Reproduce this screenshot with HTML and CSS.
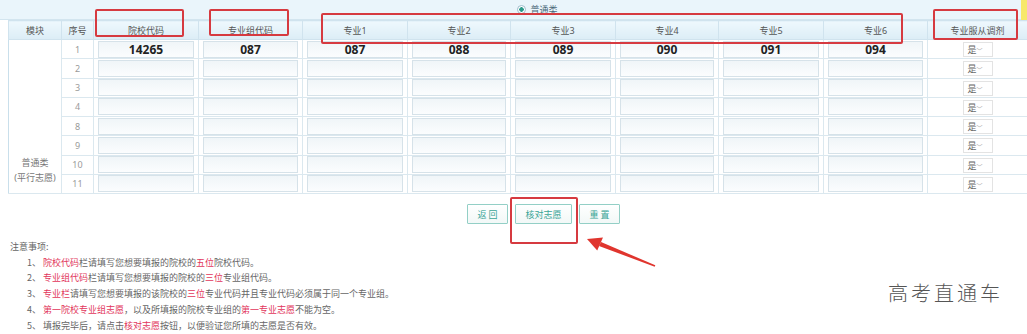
FILE: index.html
```html
<!DOCTYPE html>
<html lang="zh-CN">
<head>
  <meta charset="UTF-8">
  <title>志愿填报</title>
  <link rel="stylesheet" href="styles.css">
</head>
<body>
  <div class="page">
    <div class="wrap">
      <div class="kind-bar">
        <label class="kind"><span class="radio"></span>普通类</label>
      </div>
      <table class="grid">
        <colgroup>
          <col style="width:53px"><col style="width:32px"><col style="width:105px"><col style="width:104px">
          <col style="width:105px"><col style="width:103px"><col style="width:105px"><col style="width:103px">
          <col style="width:105px"><col style="width:104px"><col style="width:100px">
        </colgroup>
        <thead>
          <tr>
            <th>模块</th><th>序号</th><th>院校代码</th><th>专业组代码</th>
            <th>专业1</th><th>专业2</th><th>专业3</th><th>专业4</th><th>专业5</th><th>专业6</th>
            <th>专业服从调剂</th>
          </tr>
        </thead>
        <tbody>
          <tr>
            <td class="module" rowspan="8">普通类<br>(平行志愿)</td>
            <td class="no">1</td>
            <td><span class="box">14265</span></td><td><span class="box">087</span></td>
            <td><span class="box">087</span></td><td><span class="box">088</span></td><td><span class="box">089</span></td>
            <td><span class="box">090</span></td><td><span class="box">091</span></td><td><span class="box">094</span></td>
            <td class="opt"><span class="pick">是<i>﹀</i></span></td>
          </tr>
          <tr>
            <td class="no">2</td>
            <td><span class="box"></span></td><td><span class="box"></span></td><td><span class="box"></span></td><td><span class="box"></span></td>
            <td><span class="box"></span></td><td><span class="box"></span></td><td><span class="box"></span></td><td><span class="box"></span></td>
            <td class="opt"><span class="pick">是<i>﹀</i></span></td>
          </tr>
          <tr>
            <td class="no">3</td>
            <td><span class="box"></span></td><td><span class="box"></span></td><td><span class="box"></span></td><td><span class="box"></span></td>
            <td><span class="box"></span></td><td><span class="box"></span></td><td><span class="box"></span></td><td><span class="box"></span></td>
            <td class="opt"><span class="pick">是<i>﹀</i></span></td>
          </tr>
          <tr>
            <td class="no">4</td>
            <td><span class="box"></span></td><td><span class="box"></span></td><td><span class="box"></span></td><td><span class="box"></span></td>
            <td><span class="box"></span></td><td><span class="box"></span></td><td><span class="box"></span></td><td><span class="box"></span></td>
            <td class="opt"><span class="pick">是<i>﹀</i></span></td>
          </tr>
          <tr>
            <td class="no">8</td>
            <td><span class="box"></span></td><td><span class="box"></span></td><td><span class="box"></span></td><td><span class="box"></span></td>
            <td><span class="box"></span></td><td><span class="box"></span></td><td><span class="box"></span></td><td><span class="box"></span></td>
            <td class="opt"><span class="pick">是<i>﹀</i></span></td>
          </tr>
          <tr>
            <td class="no">9</td>
            <td><span class="box"></span></td><td><span class="box"></span></td><td><span class="box"></span></td><td><span class="box"></span></td>
            <td><span class="box"></span></td><td><span class="box"></span></td><td><span class="box"></span></td><td><span class="box"></span></td>
            <td class="opt"><span class="pick">是<i>﹀</i></span></td>
          </tr>
          <tr>
            <td class="no">10</td>
            <td><span class="box"></span></td><td><span class="box"></span></td><td><span class="box"></span></td><td><span class="box"></span></td>
            <td><span class="box"></span></td><td><span class="box"></span></td><td><span class="box"></span></td><td><span class="box"></span></td>
            <td class="opt"><span class="pick">是<i>﹀</i></span></td>
          </tr>
          <tr>
            <td class="no">11</td>
            <td><span class="box"></span></td><td><span class="box"></span></td><td><span class="box"></span></td><td><span class="box"></span></td>
            <td><span class="box"></span></td><td><span class="box"></span></td><td><span class="box"></span></td><td><span class="box"></span></td>
            <td class="opt"><span class="pick">是<i>﹀</i></span></td>
          </tr>
        </tbody>
      </table>
    </div>

    <div class="actions">
      <button class="btn btn-s">返 回</button>
      <button class="btn btn-l">核对志愿</button>
      <button class="btn btn-s">重 置</button>
    </div>

    <div class="notes">
      <p class="notes-title">注意事项:</p>
      <ol>
        <li><span class="n">1、</span><em>院校代码</em>栏请填写您想要填报的院校的<em>五位</em>院校代码。</li>
        <li><span class="n">2、</span><em>专业组代码</em>栏请填写您想要填报的院校的<em>三位</em>专业组代码。</li>
        <li><span class="n">3、</span><em>专业栏</em>请填写您想要填报的该院校的<em>三位</em>专业代码并且专业代码必须属于同一个专业组。</li>
        <li><span class="n">4、</span><em>第一院校专业组志愿</em>，以及所填报的院校专业组的<em>第一专业志愿</em>不能为空。</li>
        <li><span class="n">5、</span>填报完毕后，请点击<em>核对志愿</em>按钮，以便验证您所填的志愿是否有效。</li>
      </ol>
    </div>

    <!-- annotations drawn over the screenshot -->
    <div class="mark mark-school"></div>
    <div class="mark mark-group"></div>
    <div class="mark mark-majors"></div>
    <div class="mark mark-adjust"></div>
    <div class="mark mark-check"></div>
    <svg class="arrow" width="1027" height="334" viewBox="0 0 1027 334">
      <polygon points="587,239 603,237.6 597.2,250.6" fill="#e0352e"/>
      <polygon points="599,246 601,242 655.3,265.3 654.7,266.7" fill="#e0352e"/>
    </svg>
    <div class="corner"></div>
    <div class="watermark">高考直通车</div>
  </div>
</body>
</html>
```

FILE: styles.css
```css
html, body {
  margin: 0;
  padding: 0;
  background: #ffffff;
}

body {
  font-family: "Noto Sans", "Noto Sans CJK SC", sans-serif;
  color: #555;
  overflow: hidden;
}

.page {
  position: relative;
  width: 1027px;
  height: 334px;
  overflow: hidden;
}

.wrap {
  padding-left: 8px;
}

.kind-bar {
  height: 20px;
  margin-left: -8px;
  background: #eaf5fb;
  border-bottom: 1px solid #d3e5ef;
  box-sizing: border-box;
  display: flex;
  justify-content: center;
  align-items: center;
  padding-left: 48px;
  font-size: 9px;
  color: #4d6a7a;
}

.kind {
  display: flex;
  align-items: center;
  gap: 4px;
}

.radio {
  width: 7px;
  height: 7px;
  border-radius: 50%;
  border: 1px solid #9fbccc;
  background: radial-gradient(circle, #2b9a8a 0 2px, #ffffff 2.5px);
}

.grid {
  table-layout: fixed;
  width: 1019px;
  border-collapse: collapse;
}

.grid th {
  height: 18px;
  padding: 0;
  font-size: 9px;
  font-weight: normal;
  color: #555;
  background: linear-gradient(#eef8fd, #dcedf6);
  border: 1px solid #d0e3ee;
  text-align: center;
}

.grid td {
  height: 19.25px;
  padding: 0 4px;
  box-sizing: border-box;
  border: 1px solid #dbe8ef;
  background: #fff;
  text-align: center;
  font-size: 9px;
  line-height: 15px;
}

.grid td.module {
  vertical-align: bottom;
  padding: 0 0 8px;
  color: #777;
  border-left: 1px solid #c9dfeb;
}

.grid td.no {
  color: #9a9a9a;
}

.box {
  display: block;
  height: 15px;
  border: 1px solid #d6e2e9;
  background: linear-gradient(#f0f5f8, #fbfdfe);
  font-size: 12px;
  font-weight: bold;
  line-height: 15px;
  color: #222;
}

.grid td.opt {
  padding: 0;
}

.pick {
  display: inline-block;
  vertical-align: middle;
  width: 30px;
  height: 15px;
  box-sizing: border-box;
  border: 1px solid #e3e3e3;
  line-height: 13px;
  text-align: left;
  padding-left: 4px;
  color: #666;
}

.pick i {
  font-style: normal;
  font-size: 6px;
  color: #aaa;
}

.actions {
  display: flex;
  justify-content: center;
  gap: 7px;
  padding-left: 60px;
  margin-top: 10px;
}

.btn {
  height: 20px;
  padding: 0;
  font-family: "Noto Sans CJK SC", sans-serif;
  font-size: 9px;
  color: #3aa597;
  background: linear-gradient(#ffffff, #f2f8f7);
  border: 1px solid #93cfc6;
  border-radius: 1px;
}

.btn-s {
  width: 41px;
}

.btn-l {
  width: 57px;
}

.notes {
  margin-top: 15px;
  padding-left: 10px;
  font-family: "Noto Sans CJK SC", sans-serif;
  font-size: 9px;
  line-height: 15.7px;
  color: #666;
}

.notes-title {
  margin: 0;
}

.notes ol {
  list-style: none;
  margin: 0;
  padding: 0 0 0 17px;
}

.notes .n {
  display: inline-block;
  width: 16px;
}

.notes em {
  font-style: normal;
  color: #e2365b;
}

.mark {
  position: absolute;
  border: 2px solid #d63a40;
  border-radius: 2px;
  box-sizing: border-box;
}

.mark-school { left: 95px; top: 9px; width: 89px; height: 28px; }
.mark-group { left: 209px; top: 9px; width: 80px; height: 27px; }
.mark-majors { left: 321px; top: 13px; width: 582px; height: 31px; }
.mark-adjust { left: 933px; top: 9px; width: 85px; height: 31px; }
.mark-check { left: 510px; top: 197px; width: 68px; height: 47px; }

.arrow {
  position: absolute;
  left: 0;
  top: 0;
}

.corner {
  position: absolute;
  right: 0;
  top: 0;
  width: 6px;
  height: 20px;
  background: #f7e86a;
}

.watermark {
  position: absolute;
  left: 888px;
  top: 278px;
  font-family: "Noto Sans CJK SC", sans-serif;
  font-size: 20px;
  font-weight: 300;
  letter-spacing: 3px;
  color: #555;
}
```
